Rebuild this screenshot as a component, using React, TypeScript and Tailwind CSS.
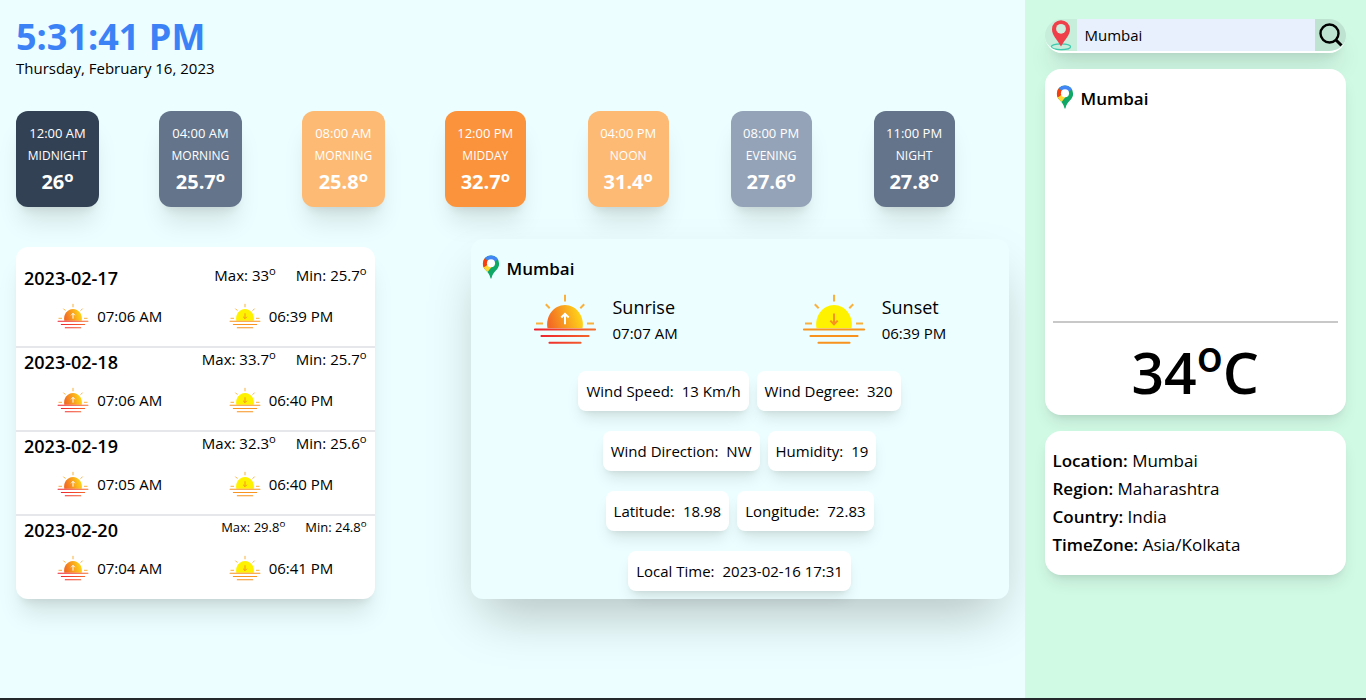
import React from "react";

type Slot = { time: string; label: string; temp: string; box: string };

const slots: Slot[] = [
  { time: "12:00 AM", label: "MIDNIGHT", temp: "26", box: "w-[83px] bg-[#334155]" },
  { time: "04:00 AM", label: "MORNING", temp: "25.7", box: "w-[83px] bg-[#64748b]" },
  { time: "08:00 AM", label: "MORNING", temp: "25.8", box: "w-[83px] bg-[#fdba74]" },
  { time: "12:00 PM", label: "MIDDAY", temp: "32.7", box: "w-[81px] bg-[#fb923c]" },
  { time: "04:00 PM", label: "NOON", temp: "31.4", box: "w-[81px] bg-[#fdba74]" },
  { time: "08:00 PM", label: "EVENING", temp: "27.6", box: "w-[81px] bg-[#94a3b8]" },
  { time: "11:00 PM", label: "NIGHT", temp: "27.8", box: "w-[81px] bg-[#64748b]" },
];

const days = [
  { date: "2023-02-17", max: "33", min: "25.7", rise: "07:06 AM", set: "06:39 PM", text: "text-[15px]" },
  { date: "2023-02-18", max: "33.7", min: "25.7", rise: "07:06 AM", set: "06:40 PM", text: "text-[15px]" },
  { date: "2023-02-19", max: "32.3", min: "25.6", rise: "07:05 AM", set: "06:40 PM", text: "text-[15px]" },
  { date: "2023-02-20", max: "29.8", min: "24.8", rise: "07:04 AM", set: "06:41 PM", text: "text-[13px]" },
];

const facts: [string, string][][] = [
  [["Wind Speed:", "13 Km/h"], ["Wind Degree:", "320"]],
  [["Wind Direction:", "NW"], ["Humidity:", "19"]],
  [["Latitude:", "18.98"], ["Longitude:", "72.83"]],
  [["Local Time:", "2023-02-16 17:31"]],
];

const place: [string, string][] = [
  ["Location:", "Mumbai"],
  ["Region:", "Maharashtra"],
  ["Country:", "India"],
  ["TimeZone:", "Asia/Kolkata"],
];

function SunIcon({ kind, className }: { kind: "rise" | "set"; className: string }) {
  const id = React.useId();
  const rise = kind === "rise";
  const line = rise ? `url(#${id}l)` : "#f7931e";
  return (
    <svg viewBox="0 -1 64 64" className={className} aria-hidden="true">
      <defs>
        <linearGradient id={`${id}d`} x1="0" x2="1" y1="0.5" y2="0.3">
          <stop offset="0" stopColor="#f26a24" />
          <stop offset="1" stopColor="#ffde17" />
        </linearGradient>
        <linearGradient id={`${id}l`} gradientUnits="userSpaceOnUse" x1="1" x2="63" y1="0" y2="0">
          <stop offset="0" stopColor="#ee1c2e" />
          <stop offset="1" stopColor="#f36f2c" />
        </linearGradient>
      </defs>
      <g stroke="#fbb03b" strokeWidth="2" fill="none">
        <path d="M32 6.7v6.8M12.8 16.3l3.9 3.9M51.2 16.3l-3.9 3.9M3 35.6h7M54 35.6h7" />
      </g>
      <path
        d="M14.5 40.3c-2.3-11.8 6-23.3 17.5-23.3s19.8 11.5 17.5 23.3z"
        fill={rise ? `url(#${id}d)` : "#fff200"}
      />
      <path d="M32 25.5v10.8" stroke={rise ? "#fff" : "#f7931e"} strokeWidth="2" fill="none" />
      <path
        d={rise ? "M28.3 29.5l3.7-3.7 3.7 3.7" : "M28.3 32.6l3.7 3.7 3.7-3.7"}
        stroke={rise ? "#fff" : "#f7931e"}
        strokeWidth="2"
        fill="none"
      />
      <g fill={line}>
        <rect x="1" y="40.5" width="62" height="2" rx="0.8" />
        <rect x="7.5" y="47" width="49" height="2" rx="0.8" />
        <rect x="15.5" y="53.7" width="33" height="2" rx="0.8" />
      </g>
    </svg>
  );
}

function MapPin() {
  const id = React.useId();
  return (
    <svg viewBox="0 0 18 25" className="mb-1 h-6 w-[18px] shrink-0" aria-hidden="true">
      <clipPath id={id}>
        <path d="M9 .5a8.5 8.5 0 0 1 8.5 8.5c0 6.5-6.5 7.5-8 15.2q-.5.9-1 0C7 16.5.5 15.5.5 9A8.5 8.5 0 0 1 9 .5z" />
      </clipPath>
      <g clipPath={`url(#${id})`}>
        <rect width="18" height="25" fill="#0fa866" />
        <path d="M-1 14V3l3.500-.2L9 9 2.200 14.200z" fill="#f4400f" />
        <path d="M-1 20v-7l3.200-.5L7 9l3 3-5.200 6.500z" fill="#fdd835" />
        <path d="M2.500 3L3 0h15l-1.300 4.500L9 9z" fill="#4285f4" />
      </g>
      <circle cx="9" cy="8.500" r="4.200" fill="#fff" />
    </svg>
  );
}

function Heading() {
  return (
    <h2 className="flex items-center gap-[7px] text-[17px] leading-7 font-semibold">
      <MapPin />
      Mumbai
    </h2>
  );
}

function SearchBar() {
  return (
    <form
      onSubmit={(e) => e.preventDefault()}
      className="flex overflow-hidden rounded-full border-b-2 border-white shadow-xl"
    >
      <label htmlFor="city" className="flex w-8 items-center justify-center bg-[#c6eedb]">
        <svg viewBox="0 0 22 32" className="h-8 w-[22px]" role="img" aria-label="City">
          <ellipse cx="11" cy="27.8" rx="9.6" ry="2.9" fill="none" stroke="#3fc9ae" strokeWidth="1.2" />
          <path
            d="M11 1.2a9 9 0 0 1 9 9C20 16.5 15 20 11 27.5 7 20 2 16.5 2 10.2a9 9 0 0 1 9-9z"
            fill="#ef404a"
          />
          <circle cx="11" cy="9.8" r="4.9" fill="#cdeedd" />
        </svg>
      </label>
      <input
        id="city"
        type="text"
        defaultValue="Mumbai"
        className="h-8 min-w-0 flex-1 bg-[#e8f0fe] px-2 text-[15px] outline-none"
      />
      <button type="submit" aria-label="Search" className="flex w-[31px] items-center justify-center bg-[#bee3d0]">
        <svg viewBox="0 0 24 24" className="size-6" fill="none" stroke="#000" strokeWidth="2.4" aria-hidden="true">
          <circle cx="10.5" cy="10.5" r="9" />
          <path d="M17 17l5.5 5.5" strokeWidth="3" />
        </svg>
      </button>
    </form>
  );
}

export default function App() {
  return (
    <div className="flex min-h-screen border-b-2 border-[#24292b] bg-[#ecfeff] font-['Open_Sans','Noto_Sans',sans-serif] text-black">
      <main className="w-3/4 px-4 pt-4">
        <header>
          <h1 className="text-[36px] leading-[42px] font-bold text-[#3b82f6]">5:31:41 PM</h1>
          <p className="text-[15px] leading-5">Thursday, February 16, 2023</p>
        </header>

        <section className="mt-[33px] -mr-2 grid grid-cols-7">
          {slots.map((s) => (
            <article
              key={s.time}
              className={`flex h-24 flex-col items-center rounded-xl pt-2.5 text-white shadow-xl ${s.box}`}
            >
              <p className="text-[13px] leading-6">{s.time}</p>
              <p className="text-[12px] leading-[22px]">{s.label}</p>
              <p className="text-[20px] leading-[30px] font-bold">
                {s.temp}
                <sup>o</sup>
              </p>
            </article>
          ))}
        </section>

        <div className="mt-8 grid grid-cols-[2fr_3fr] gap-24">
          <section className="mt-2 rounded-xl bg-white pt-[17px] shadow-xl">
            {days.map((d) => (
              <article
                key={d.date}
                className="h-[84px] border-b-2 border-gray-200 px-2 last:h-[83px] last:border-b-0"
              >
                <div className="flex justify-between">
                  <h3 className="text-[18px] leading-7 font-semibold">{d.date}</h3>
                  <p className={`flex gap-5 leading-[22px] ${d.text}`}>
                    <span>
                      Max: {d.max}
                      <sup>o</sup>
                    </span>
                    <span>
                      Min: {d.min}
                      <sup>o</sup>
                    </span>
                  </p>
                </div>
                <div className="mt-2 flex justify-around text-[15px]">
                  <p className="flex items-center gap-2">
                    <SunIcon kind="rise" className="size-8" />
                    {d.rise}
                  </p>
                  <p className="flex items-center gap-2">
                    <SunIcon kind="set" className="size-8" />
                    {d.set}
                  </p>
                </div>
              </article>
            ))}
          </section>

          <section className="rounded-xl bg-[#ecfeff] pt-4 pb-2 shadow-2xl">
            <div className="px-[11px]">
              <Heading />
            </div>
            <div className="mt-1 grid grid-cols-2">
              <div className="flex items-center justify-center gap-4">
                <SunIcon kind="rise" className="size-16" />
                <p>
                  <span className="block text-[18px] leading-7">Sunrise</span>
                  <span className="block text-[15px] leading-6">07:07 AM</span>
                </p>
              </div>
              <div className="flex items-center justify-center gap-4">
                <SunIcon kind="set" className="size-16" />
                <p>
                  <span className="block text-[18px] leading-7">Sunset</span>
                  <span className="block text-[15px] leading-6">06:39 PM</span>
                </p>
              </div>
            </div>
            <div className="mt-5 flex flex-col gap-5">
              {facts.map((row) => (
                <div key={row[0][0]} className="flex justify-center gap-2">
                  {row.map(([label, value]) => (
                    <p key={label} className="flex gap-2 rounded-lg bg-white p-2 text-[15px] leading-6 shadow-lg">
                      <span>{label}</span>
                      <span>{value}</span>
                    </p>
                  ))}
                </div>
              ))}
            </div>
          </section>
        </div>
      </main>

      <aside className="w-1/4 bg-[#d1fae5] px-5 pt-[19px]">
        <SearchBar />
        <section className="mt-4 rounded-2xl bg-white px-2 pt-4 shadow-lg">
          <div className="px-[3px]">
            <Heading />
          </div>
          <div className="h-52" />
          <hr className="border-t-2 border-[#c8c8c8]" />
          <p className="flex h-[92px] items-center justify-center pt-1.5 text-[57px] leading-none font-semibold">
            <span>
              34<sup>o</sup>C
            </span>
          </p>
        </section>
        <section className="mt-4 rounded-2xl bg-white px-2 py-4 text-[17px] leading-7 shadow-lg">
          {place.map(([label, value]) => (
            <p key={label}>
              <span className="font-semibold">{label}</span> {value}
            </p>
          ))}
        </section>
      </aside>
    </div>
  );
}
